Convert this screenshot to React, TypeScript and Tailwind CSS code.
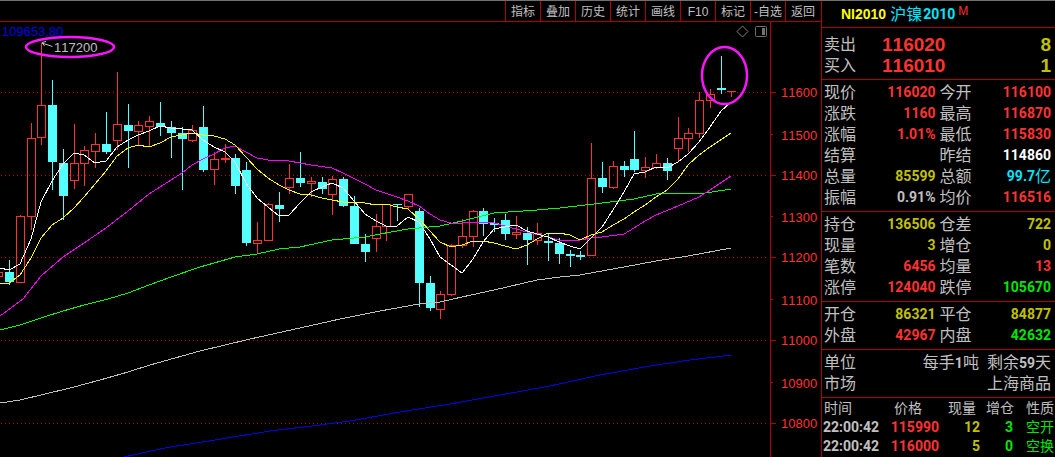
import clsx from "clsx";

type Tone = "red" | "yellow" | "green" | "cyan" | "white" | "gray";

const TONES: Record<Tone, string> = {
  red: "text-[#ff3232]",
  yellow: "text-[#c0c000]",
  green: "text-[#00e600]",
  cyan: "text-[#00e6ff]",
  white: "text-white",
  gray: "text-[#c0c0c0]",
};

const MENU = ["指标", "叠加", "历史", "统计", "画线", "F10", "标记", "-自选", "返回"];

// x, high, body top, body bottom, low, rising
type Candle = [number, number, number, number, number, 0 | 1];

const CANDLES: Candle[] = [
  [-2, 272, 272, 277, 277, 1],
  [9, 260, 272, 282, 285, 0],
  [20, 215, 216, 283, 283, 1],
  [31, 123, 138, 217, 230, 1],
  [41, 43, 105, 138, 145, 1],
  [52, 80, 105, 162, 190, 0],
  [63, 149, 163, 196, 220, 0],
  [74, 124, 163, 181, 189, 1],
  [84, 146, 150, 164, 186, 1],
  [95, 133, 144, 152, 168, 1],
  [106, 112, 144, 152, 154, 0],
  [117, 72, 124, 141, 150, 1],
  [128, 104, 125, 131, 168, 0],
  [138, 121, 125, 132, 146, 1],
  [149, 116, 121, 127, 147, 1],
  [160, 102, 123, 127, 136, 0],
  [171, 121, 127, 133, 158, 0],
  [182, 127, 133, 139, 190, 0],
  [192, 125, 130, 141, 142, 1],
  [203, 106, 127, 170, 172, 0],
  [214, 152, 159, 170, 185, 1],
  [225, 144, 158, 160, 163, 1],
  [235, 154, 158, 186, 194, 0],
  [246, 162, 170, 243, 246, 0],
  [257, 222, 240, 244, 254, 1],
  [268, 203, 204, 241, 241, 1],
  [279, 192, 205, 209, 222, 0],
  [289, 164, 178, 188, 194, 1],
  [300, 152, 178, 183, 187, 0],
  [311, 177, 181, 184, 197, 1],
  [322, 177, 182, 189, 194, 0],
  [332, 176, 179, 195, 215, 1],
  [343, 177, 179, 206, 207, 0],
  [354, 196, 206, 244, 244, 0],
  [365, 234, 244, 252, 262, 0],
  [376, 214, 226, 239, 252, 1],
  [386, 204, 204, 227, 241, 1],
  [397, 204, 204, 205, 221, 0],
  [408, 194, 194, 207, 209, 1],
  [419, 208, 211, 283, 307, 0],
  [430, 276, 283, 308, 311, 0],
  [440, 291, 294, 310, 319, 1],
  [451, 244, 245, 295, 296, 1],
  [462, 219, 236, 246, 248, 1],
  [473, 210, 211, 237, 247, 1],
  [483, 208, 211, 224, 236, 0],
  [494, 218, 223, 225, 232, 0],
  [505, 214, 220, 234, 240, 0],
  [516, 216, 232, 235, 239, 1],
  [527, 227, 233, 240, 265, 0],
  [537, 223, 233, 241, 245, 1],
  [548, 233, 241, 243, 261, 0],
  [559, 238, 243, 254, 264, 0],
  [570, 250, 254, 256, 267, 0],
  [580, 251, 255, 257, 260, 0],
  [591, 143, 178, 256, 256, 1],
  [602, 162, 178, 187, 193, 0],
  [613, 161, 166, 188, 189, 1],
  [624, 161, 166, 170, 177, 0],
  [634, 131, 159, 170, 172, 0],
  [645, 157, 167, 171, 178, 1],
  [656, 154, 163, 168, 169, 1],
  [667, 158, 163, 171, 180, 0],
  [678, 117, 138, 149, 161, 1],
  [688, 128, 133, 139, 152, 1],
  [699, 92, 100, 134, 138, 1],
  [710, 89, 94, 101, 108, 1],
  [721, 56, 88, 90, 94, 0],
  [731, 91, 91, 92, 97, 1],
];

const AVERAGES = [
  {
    color: "#0000e6",
    points:
      "124,457 165,448 215,440 270,431 320,425 350,421 400,412 450,404 500,395 550,386 600,375 650,366 690,360 731,355",
  },
  {
    color: "#c0c0c0",
    points:
      "0,403 20,400 41,395 74,387 100,380 128,372 150,365 200,351 250,339 300,328 340,319 380,311 419,304 440,302 462,297 494,290 537,280 560,277 580,275 624,267 656,261 688,256 731,248",
  },
  {
    color: "#00ff00",
    points:
      "0,330 20,325 41,318 63,311 84,305 108,299 128,293 149,285 171,277 200,267 235,257 257,254 279,249 300,247 332,240 365,237 380,234 408,229 440,226 462,221 494,213 537,210 560,208 602,203 634,199 656,194 667,193 699,194 731,189",
  },
  {
    color: "#ff00ff",
    points:
      "0,316 23,299 41,276 63,257 84,243 106,228 128,211 149,194 171,180 182,173 192,165 203,159 214,154 225,148 235,146 246,152 257,158 268,160 289,161 311,165 332,168 343,173 365,184 376,190 397,197 408,201 419,206 430,214 440,220 451,223 462,223 483,222 494,223 505,226 516,229 527,232 548,237 559,240 580,240 591,238 602,237 624,234 634,228 645,221 656,215 678,206 699,197 710,190 731,176",
  },
  {
    color: "#ffff00",
    points:
      "0,284 9,283 20,275 31,258 41,238 52,225 63,218 74,208 84,197 95,184 106,171 117,156 128,148 138,145 149,147 160,143 171,137 182,135 192,133 203,135 214,136 225,139 235,145 246,157 257,169 268,178 279,185 289,190 300,194 311,195 322,198 332,200 343,202 354,202 365,203 376,205 386,204 397,207 408,209 419,219 430,231 440,242 451,247 462,245 473,241 483,241 494,243 505,246 516,249 527,245 537,239 548,233 559,233 570,235 580,240 591,235 602,232 613,225 624,219 634,212 645,205 656,197 667,190 678,179 688,165 699,155 710,147 731,133",
  },
  {
    color: "#ffffff",
    points:
      "0,268 9,270 20,264 31,239 41,202 52,181 63,164 74,153 84,155 95,163 106,161 117,147 128,140 138,135 149,131 160,126 171,128 182,129 192,130 203,140 214,147 225,152 235,162 246,183 257,198 268,207 279,216 289,215 300,203 311,192 322,187 332,183 343,188 354,201 365,214 376,221 386,226 397,226 408,217 419,222 430,239 440,257 451,265 462,273 473,259 483,242 494,229 505,227 516,225 527,231 537,234 548,237 559,242 570,246 580,249 591,238 602,227 613,210 624,192 634,174 645,172 656,167 667,168 678,162 688,154 699,142 710,127 721,111 731,102",
  },
];

const SCALE = [
  { label: "11600", y: 92 },
  { label: "11500", y: 134 },
  { label: "11400", y: 175 },
  { label: "11300", y: 216 },
  { label: "11200", y: 257 },
  { label: "11100", y: 299 },
  { label: "11000", y: 340 },
  { label: "10900", y: 382 },
  { label: "10800", y: 423 },
];

type Quote = { label: string; value: string; tone: Tone; unit?: string };

const PRICES: Quote[] = [
  { label: "现价", value: "116020", tone: "red" },
  { label: "今开", value: "116100", tone: "red" },
  { label: "涨跌", value: "1160", tone: "red" },
  { label: "最高", value: "116870", tone: "red" },
  { label: "涨幅", value: "1.01%", tone: "red" },
  { label: "最低", value: "115830", tone: "red" },
  { label: "结算", value: "", tone: "gray" },
  { label: "昨结", value: "114860", tone: "white" },
  { label: "总量", value: "85599", tone: "yellow" },
  { label: "总额", value: "99.7", tone: "cyan", unit: "亿" },
  { label: "振幅", value: "0.91%", tone: "gray" },
  { label: "均价", value: "116516", tone: "red" },
];

const POSITIONS: Quote[] = [
  { label: "持仓", value: "136506", tone: "yellow" },
  { label: "仓差", value: "722", tone: "yellow" },
  { label: "现量", value: "3", tone: "yellow" },
  { label: "增仓", value: "0", tone: "yellow" },
  { label: "笔数", value: "6456", tone: "red" },
  { label: "均量", value: "13", tone: "red" },
  { label: "涨停", value: "124040", tone: "red" },
  { label: "跌停", value: "105670", tone: "green" },
];

const VOLUMES: Quote[] = [
  { label: "开仓", value: "86321", tone: "yellow" },
  { label: "平仓", value: "84877", tone: "yellow" },
  { label: "外盘", value: "42967", tone: "red" },
  { label: "内盘", value: "42632", tone: "green" },
];

const DEPTH = [
  { label: "卖出", price: "116020", lots: "8" },
  { label: "买入", price: "116010", lots: "1" },
];

const TRADES = [
  { time: "22:00:42", price: "115990", lots: "12", change: "3", kind: "空开" },
  { time: "22:00:42", price: "116000", lots: "5", change: "0", kind: "空换" },
];

const SECTION = "border-b border-[#b00000] pt-0.5 pr-1 pb-[3px] pl-0.5";
const NUM = "font-['Roboto','Noto_Sans_CJK_SC',sans-serif] text-[14px] font-bold";

const CandleBar = ({ candle }: { candle: Candle }) => {
  const [x, high, top, bottom, low, rising] = candle;
  const color = rising ? "#ff3232" : "#54ffff";
  const hollow = rising === 1 && bottom - top > 2;

  return (
    <g>
      <rect x={x} y={high} width={1} height={top - high} fill={color} />
      <rect x={x} y={bottom} width={1} height={low - bottom} fill={color} />
      {hollow ? (
        <rect
          x={x - 3.5}
          y={top + 0.5}
          width={8}
          height={bottom - top - 1}
          fill="none"
          stroke={color}
        />
      ) : (
        <rect x={x - 4} y={top} width={9} height={bottom - top} fill={color} />
      )}
    </g>
  );
};

const Chart = () => (
  <svg
    viewBox="0 22 821 435"
    className="block h-auto w-full font-['Liberation_Sans',sans-serif] text-[13px] [font-kerning:none]"
    role="img"
    aria-label="NI2010 K线图"
  >
    <text x={2} y={36} fill="#0000e6">
      109653.80
    </text>

    <g shapeRendering="crispEdges">
      {SCALE.map(({ label, y }, i) => (
        <g key={label}>
          {i % 2 === 0 && (
            <line
              x1={1}
              x2={768}
              y1={y + 0.5}
              y2={y + 0.5}
              stroke="#b00000"
              strokeDasharray="1 3"
            />
          )}
          <rect x={771} y={y} width={i % 2 === 0 ? 5 : 2} height={1} fill="#b00000" />
        </g>
      ))}
      <rect x={770} y={22} width={1} height={435} fill="#b00000" />
      {CANDLES.map((candle) => (
        <CandleBar key={candle[0]} candle={candle} />
      ))}
      {AVERAGES.map(({ color, points }) => (
        <polyline key={color} points={points} fill="none" stroke={color} />
      ))}
    </g>

    {SCALE.map(({ label, y }, i) => (
      <text key={label} x={781} y={i % 2 === 0 ? y + 5 : y + 6} fill="#ff3232">
        {label}
      </text>
    ))}

    <path d="M52.5 46.5 L42 43 M46 41.5 L42 42.5 L44.5 46" fill="none" stroke="#c0c0c0" />
    <text x={54} y={52} fill="#c0c0c0">
      117200
    </text>

    <path
      d="M742.5 26 L748 31.5 L742.5 37 L737 31.5 Z"
      fill="none"
      stroke="#808080"
    />
    <rect x={755.5} y={26.5} width={11} height={10} rx={1} fill="none" stroke="#707070" />
    <rect x={762} y={28} width={3} height={7} fill="#707070" />

    <g fill="none" stroke="#ff14ff" strokeWidth={2.5}>
      <ellipse cx={70} cy={47} rx={44} ry={10} />
      <ellipse cx={724.5} cy={75.5} rx={22.5} ry={28.5} />
    </g>
  </svg>
);

const QuoteGrid = ({ items }: { items: Quote[] }) => (
  <dl className={clsx(SECTION, "grid grid-cols-2 gap-x-1")}>
    {items.map(({ label, value, tone, unit }) => (
      <div key={label} className="flex h-[21px] items-center justify-between">
        <dt>{label}</dt>
        <dd className={clsx("flex items-center", TONES[tone])}>
          <span className={NUM}>{value}</span>
          {unit}
        </dd>
      </div>
    ))}
  </dl>
);

const App = () => {
  return (
    <div className="flex min-h-screen items-stretch overflow-hidden border-t border-[#707070] bg-black font-['Liberation_Sans','Noto_Sans_CJK_SC',sans-serif] text-[#c0c0c0]">
      <main className="min-w-0 flex-1">
        <nav className="flex h-[21px] justify-end border-b border-[#b00000] pr-px">
          {MENU.map((item) => (
            <button
              key={item}
              type="button"
              className="w-[35px] border-l border-[#b00000] pt-px text-center text-[12px] leading-5 whitespace-nowrap"
            >
              {item}
            </button>
          ))}
        </nav>
        <Chart />
      </main>

      <aside className="w-[234px] shrink-0 border-l border-[#b00000] text-[16px] leading-[21px] [font-kerning:none]">
        <h1 className="flex h-[27px] items-center border-b border-[#b00000] pl-[19px]">
          <span className="text-[14px] font-bold text-[#ffff00]">NI2010</span>
          <span className="ml-1 text-[#00e6ff]">沪镍</span>
          <span className={clsx(NUM, "ml-px text-[#00e6ff]")}>2010</span>
          <sup className="top-0 ml-[3px] self-start text-[12px] leading-5 text-[#ff3232]">M</sup>
        </h1>

        <dl className="border-b border-[#b00000] pt-1.5 pr-1 pb-[3px] pl-0.5">
          {DEPTH.map(({ label, price, lots }) => (
            <div key={label} className="flex h-[21px] items-center">
              <dt className="w-[58px]">{label}</dt>
              <dd className="flex flex-1 justify-between text-[19px] leading-5 font-bold">
                <span className="text-[#ff3232]">{price}</span>
                <span className="text-[#c0c000]">{lots}</span>
              </dd>
            </div>
          ))}
        </dl>

        <QuoteGrid items={PRICES} />
        <QuoteGrid items={POSITIONS} />
        <QuoteGrid items={VOLUMES} />

        <dl className={SECTION}>
          <div className="flex h-[21px] items-center justify-between">
            <dt>单位</dt>
            <dd className="flex gap-2">
              <span>
                每手<span className={NUM}>1</span>吨
              </span>
              <span>
                剩余<span className={NUM}>59</span>天
              </span>
            </dd>
          </div>
          <div className="flex h-[21px] items-center justify-between">
            <dt>市场</dt>
            <dd>上海商品</dd>
          </div>
        </dl>

        <table className="mt-px w-full table-fixed text-right text-[14px] leading-[19px]">
          <colgroup>
            <col className="w-[60px]" />
            <col className="w-[58px]" />
            <col className="w-[41px]" />
            <col className="w-[33px]" />
            <col />
          </colgroup>
          <thead>
            <tr className="h-[19px]">
              <th className="pl-0.5 text-left font-normal">时间</th>
              <th className="pr-[18px] font-normal whitespace-nowrap">价格</th>
              <th className="pr-[5px] font-normal">现量</th>
              <th className="font-normal">增仓</th>
              <th className="pr-px font-normal">性质</th>
            </tr>
          </thead>
          <tbody>
            {TRADES.map(({ time, price, lots, change, kind }) => (
              <tr key={price} className="h-[19px]">
                <td className={clsx(NUM, "pl-px text-left")}>{time}</td>
                <td className={clsx(NUM, "pr-px", TONES.red)}>{price}</td>
                <td className={clsx(NUM, "pr-px", TONES.yellow)}>{lots}</td>
                <td className={clsx(NUM, "pr-px", TONES.green)}>{change}</td>
                <td className={clsx("pr-px", TONES.green)}>{kind}</td>
              </tr>
            ))}
          </tbody>
        </table>
      </aside>
    </div>
  );
};

export default App;
